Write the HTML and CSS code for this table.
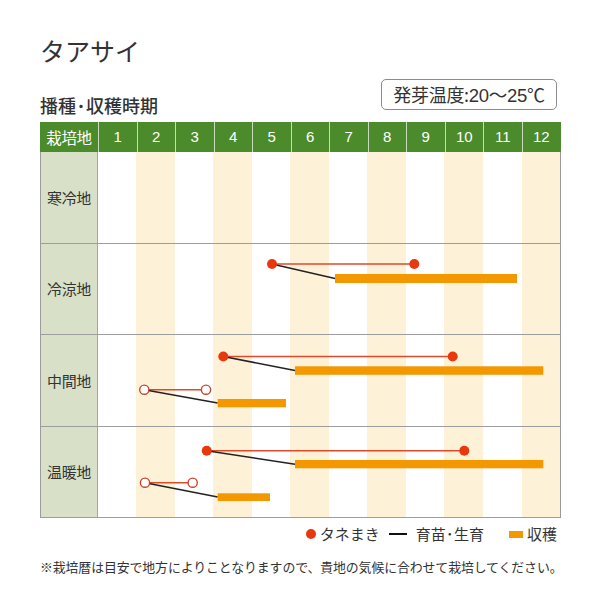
FILE: index.html
```html
<!DOCTYPE html>
<html lang="ja">
<head>
<meta charset="utf-8">
<title>タアサイ</title>
<link rel="stylesheet" href="styles.css">
</head>
<body>
<div class="page">
  <h1 class="title">タアサイ</h1>
  <div class="subhead">
    <h2 class="heading">播種<span class="nd">･</span>収穫時期</h2>
    <div class="temp">発芽温度:<span class="num">20～25</span>℃</div>
  </div>
  <div class="table">
    <div class="thead">
      <div class="th th-label">栽培地</div>
      <div class="th">1</div><div class="th">2</div><div class="th">3</div><div class="th">4</div>
      <div class="th">5</div><div class="th">6</div><div class="th">7</div><div class="th">8</div>
      <div class="th">9</div><div class="th">10</div><div class="th">11</div><div class="th">12</div>
    </div>
    <div class="row">
      <div class="label">寒冷地</div>
      <div class="chart"><svg class="marks" width="462" height="90" viewBox="0 0 462 90"></svg></div>
    </div>
    <div class="row">
      <div class="label">冷涼地</div>
      <div class="chart">
        <svg class="marks" width="462" height="90" viewBox="0 0 462 90">
          <line class="sow-line" x1="174" y1="20" x2="316" y2="20"/>
          <line class="grow-line" x1="174" y1="20" x2="237" y2="34.5"/>
          <rect class="harvest" x="237" y="30" width="182" height="9"/>
          <circle class="sow" cx="174" cy="20" r="5"/>
          <circle class="sow" cx="316.3" cy="20" r="5"/>
        </svg>
      </div>
    </div>
    <div class="row">
      <div class="label">中間地</div>
      <div class="chart">
        <svg class="marks" width="462" height="90" viewBox="0 0 462 90">
          <line class="sow-line" x1="125.3" y1="21.5" x2="354.7" y2="21.5"/>
          <line class="grow-line" x1="125.3" y1="21.5" x2="197" y2="35.5"/>
          <rect class="harvest" x="197" y="31.3" width="248.3" height="8.5"/>
          <circle class="sow" cx="125.3" cy="21.5" r="5"/>
          <circle class="sow" cx="354.7" cy="21.5" r="5"/>
          <line class="sow-line" x1="46.3" y1="54.7" x2="108" y2="54.7"/>
          <line class="grow-line" x1="46.3" y1="54.7" x2="119.7" y2="68"/>
          <rect class="harvest" x="119.7" y="64" width="68.3" height="8.3"/>
          <circle class="sow-hollow" cx="46.3" cy="54.7" r="4.6"/>
          <circle class="sow-hollow" cx="108" cy="54.7" r="4.6"/>
        </svg>
      </div>
    </div>
    <div class="row">
      <div class="label">温暖地</div>
      <div class="chart">
        <svg class="marks" width="462" height="90" viewBox="0 0 462 90">
          <line class="sow-line" x1="108.7" y1="23.7" x2="366.3" y2="23.7"/>
          <line class="grow-line" x1="108.7" y1="23.7" x2="197" y2="37.2"/>
          <rect class="harvest" x="197" y="33" width="248.3" height="8.3"/>
          <circle class="sow" cx="108.7" cy="23.7" r="5"/>
          <circle class="sow" cx="366.3" cy="23.7" r="5"/>
          <line class="sow-line" x1="47" y1="55.7" x2="94.7" y2="55.7"/>
          <line class="grow-line" x1="47" y1="55.7" x2="119.7" y2="70"/>
          <rect class="harvest" x="119.7" y="66.3" width="52.3" height="7.7"/>
          <circle class="sow-hollow" cx="47" cy="55.7" r="4.6"/>
          <circle class="sow-hollow" cx="94.7" cy="55.7" r="4.6"/>
        </svg>
      </div>
    </div>
  </div>
  <div class="legend">
    <span class="lg-item"><span class="lg-dot"></span>タネまき</span>
    <span class="lg-item"><span class="lg-line"></span>育苗<span class="nd">･</span>生育</span>
    <span class="lg-item"><span class="lg-bar"></span>収穫</span>
  </div>
  <p class="note">※栽培暦は目安で地方によりことなりますので、貴地の気候に合わせて栽培してください。</p>
</div>
</body>
</html>
```

FILE: styles.css
```css
* { box-sizing: border-box; }
html, body { margin: 0; padding: 0; background: #fff; }
body {
  font-family: "Noto Sans CJK JP", "Noto Sans", sans-serif;
  color: #333;
}
.page {
  width: 600px;
  padding: 35px 39px 0 40px;
}
.title {
  margin: 0;
  font-size: 25px;
  line-height: 30px;
  font-weight: 400;
  color: #333;
}
.subhead {
  display: flex;
  justify-content: space-between;
  align-items: flex-start;
  height: 36px;
  margin-top: 14px;
}
.heading {
  margin: 0;
  align-self: flex-end;
  font-size: 18px;
  line-height: 20px;
  font-weight: 500;
  color: #333;
}
.nd {
  display: inline-block;
  width: 0.55em;
  text-align: center;
}
.temp {
  height: 31px;
  width: 176px;
  margin-right: 4px;
  border: 1px solid #8c8c8c;
  border-radius: 5px;
  font-size: 18px;
  line-height: 28px;
  text-align: center;
  color: #333;
  letter-spacing: -0.3px;
}
.num {
  font-family: "Liberation Sans", "Noto Sans CJK JP", sans-serif;
  font-size: 18.5px;
}
.table {
  width: 521px;
  margin-top: 7px;
}
.thead {
  display: grid;
  grid-template-columns: 58px repeat(12, 1fr);
  height: 30px;
  padding-right: 1px;
  background: #4b8b2c;
}
.th {
  color: #fff;
  font-family: "Liberation Sans", Arial, sans-serif;
  font-size: 15px;
  line-height: 30px;
  text-align: center;
  border-left: 1px solid #c8dcbc;
}
.th-label {
  border-left: none;
  font-family: "Noto Sans CJK JP", sans-serif;
  font-size: 15.5px;
  letter-spacing: -0.3px;
}
.row {
  display: grid;
  grid-template-columns: 57px 1fr;
  height: 91.5px;
  border-left: 1px solid #9b9b9b;
  border-right: 1px solid #9b9b9b;
  border-bottom: 1.5px solid #9d9d9d;
}
.label {
  background: #d9e0c8;
  border-right: 1px solid #a4a89a;
  display: flex;
  align-items: center;
  justify-content: center;
  font-size: 15px;
  color: #333;
  letter-spacing: -0.3px;
}
.chart {
  background: repeating-linear-gradient(to right, #fff 0 38.5px, #fdf2d8 38.5px 77px);
  overflow: hidden;
}
.marks { display: block; }
.sow-line { stroke: #df4a2a; stroke-width: 1.6; }
.grow-line { stroke: #222; stroke-width: 1.5; }
.harvest { fill: #f39800; }
.sow { fill: #e8380d; }
.sow-hollow { fill: #fff; stroke: #c8452c; stroke-width: 1.4; }
.legend {
  display: flex;
  justify-content: flex-end;
  align-items: center;
  gap: 9px;
  margin-top: 5px;
  padding-right: 4px;
  font-size: 15px;
  line-height: 22px;
  color: #333;
}
.lg-item {
  display: flex;
  align-items: center;
}
.lg-dot {
  width: 10px;
  height: 10px;
  border-radius: 50%;
  background: #e8380d;
  margin-right: 4px;
}
.lg-line {
  width: 18px;
  height: 2px;
  background: #111;
  margin-right: 9px;
}
.lg-bar {
  width: 14px;
  height: 7px;
  background: #f39800;
  margin-left: 16px;
  margin-right: 4px;
}
.note {
  margin: 13px 0 0 0;
  font-size: 12.9px;
  line-height: 18px;
  color: #333;
  white-space: nowrap;
  letter-spacing: -0.1px;
}
```
